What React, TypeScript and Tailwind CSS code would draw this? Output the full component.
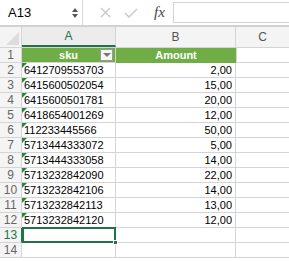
import React from "react";

interface Row {
  sku: string;
  amount: string;
}

const rows: Row[] = [
  { sku: "6412709553703", amount: "2,00" },
  { sku: "6415600502054", amount: "15,00" },
  { sku: "6415600501781", amount: "20,00" },
  { sku: "6418654001269", amount: "12,00" },
  { sku: "112233445566", amount: "50,00" },
  { sku: "5713444333072", amount: "5,00" },
  { sku: "5713444333058", amount: "14,00" },
  { sku: "5713232842090", amount: "22,00" },
  { sku: "5713232842106", amount: "14,00" },
  { sku: "5713232842113", amount: "13,00" },
  { sku: "5713232842120", amount: "12,00" },
];

const font = { fontFamily: '"Liberation Sans", Arial, sans-serif' };

function RowNum({ n, active }: { n: number; active?: boolean }) {
  return (
    <div
      className={`w-[22px] shrink-0 h-full flex items-center justify-center text-[12px] bg-[#f4f4f4] border-r border-b border-[#d4d4d4] ${
        active ? "text-[#217346] border-r-[#217346]" : "text-[#666]"
      }`}
    >
      {n}
    </div>
  );
}

function App() {
  return (
    <div className="w-[289px] h-[261px] overflow-hidden bg-white text-[11px]" style={font}>
      {/* Formula bar */}
      <div className="h-[27px] flex items-center border-b-2 border-[#d2d2d2]">
        <div className="w-[83px] h-full flex items-center justify-between pl-2 pr-1 border-r border-[#d8d8d8]">
          <span className="text-[13px] text-black">A13</span>
          <div className="flex flex-col gap-[2px] items-center">
            <div className="w-0 h-0 border-l-[3px] border-r-[3px] border-b-[4px] border-l-transparent border-r-transparent border-b-[#555]" />
            <div className="w-0 h-0 border-l-[3px] border-r-[3px] border-t-[4px] border-l-transparent border-r-transparent border-t-[#555]" />
          </div>
        </div>
        <div className="flex items-center pl-4 gap-[12px]">
          <svg width="13" height="13" viewBox="0 0 13 13">
            <path d="M2 2 L11 11 M11 2 L2 11" stroke="#c8c8c8" strokeWidth="1.4" />
          </svg>
          <svg width="14" height="12" viewBox="0 0 14 12">
            <path d="M1 6 L5 10 L13 2" fill="none" stroke="#c8c8c8" strokeWidth="1.4" />
          </svg>
          <span
            className="text-[15px] text-[#444] italic ml-[4px]"
            style={{ fontFamily: '"Liberation Serif", serif' }}
          >
            fx
          </span>
        </div>
        <div className="ml-[8px] flex-1 h-[21px] border border-[#d4d4d4] border-r-0" />
      </div>

      {/* Column headers */}
      <div className="h-[21px] flex bg-[#f4f4f4] border-b border-[#d4d4d4] text-[12px] text-[#555]">
        <div className="w-[22px] shrink-0 relative border-r border-[#d4d4d4]">
          <svg className="absolute right-[2px] bottom-[2px]" width="13" height="13" viewBox="0 0 13 13">
            <path d="M13 0 L13 13 L0 13 Z" fill="#dcdcdc" />
          </svg>
        </div>
        <div className="w-[94px] shrink-0 flex items-center justify-center border-r border-[#d4d4d4] border-b-2 border-b-[#217346] text-[#217346] bg-[#ececec]">
          A
        </div>
        <div className="w-[120px] shrink-0 flex items-center justify-center border-r border-[#d4d4d4]">
          B
        </div>
        <div className="flex-1 flex items-center justify-center">C</div>
      </div>

      {/* Row 1 header */}
      <div className="h-[15px] flex">
        <RowNum n={1} />
        <div className="w-[94px] shrink-0 relative flex items-center justify-center bg-[#70ad47] border-r border-b border-[#d4d4d4] text-white font-bold">
          sku
          <div className="absolute right-[2px] top-[1px] w-[13px] h-[12px] bg-[#f6f6f6] border border-[#9a9a9a] flex items-center justify-center">
            <div className="w-0 h-0 border-l-[4px] border-r-[4px] border-t-[4px] border-l-transparent border-r-transparent border-t-[#777]" />
          </div>
        </div>
        <div className="w-[120px] shrink-0 flex items-center justify-center bg-[#70ad47] border-b border-[#70ad47] text-white font-bold">
          Amount
        </div>
        <div className="flex-1 border-l border-b border-[#d4d4d4]" />
      </div>

      {rows.map((r, i) => (
        <div key={r.sku} className="h-[15px] flex">
          <RowNum n={i + 2} />
          <div className="w-[94px] shrink-0 relative flex items-center pl-[2px] border-r border-b border-[#d4d4d4] text-black">
            <svg className="absolute left-0 top-0" width="5" height="5" viewBox="0 0 5 5">
              <path d="M0 0 L5 0 L0 5 Z" fill="#1e8a3a" />
            </svg>
            {r.sku}
          </div>
          <div className="w-[120px] shrink-0 flex items-center justify-end pr-[3px] border-r border-b border-[#d4d4d4] text-black">
            {r.amount}
          </div>
          <div className="flex-1 border-b border-[#d4d4d4]" />
        </div>
      ))}

      {/* Row 13 (selected) */}
      <div className="h-[15px] flex">
        <RowNum n={13} active />
        <div className="w-[94px] shrink-0 relative border-r border-b border-[#d4d4d4]">
          <div className="absolute left-0 top-[-1px] right-[-1px] bottom-[-1px] border-2 border-[#217346]" />
          <div className="absolute right-[-3px] bottom-[-3px] w-[5px] h-[5px] bg-[#217346] border border-white" />
        </div>
        <div className="w-[120px] shrink-0 border-r border-b border-[#d4d4d4]" />
        <div className="flex-1 border-b border-[#d4d4d4]" />
      </div>

      <div className="h-[15px] flex">
        <RowNum n={14} />
        <div className="w-[94px] shrink-0 border-r border-b border-[#d4d4d4]" />
        <div className="w-[120px] shrink-0 border-r border-b border-[#d4d4d4]" />
        <div className="flex-1 border-b border-[#d4d4d4]" />
      </div>
    </div>
  );
}

export default App;
